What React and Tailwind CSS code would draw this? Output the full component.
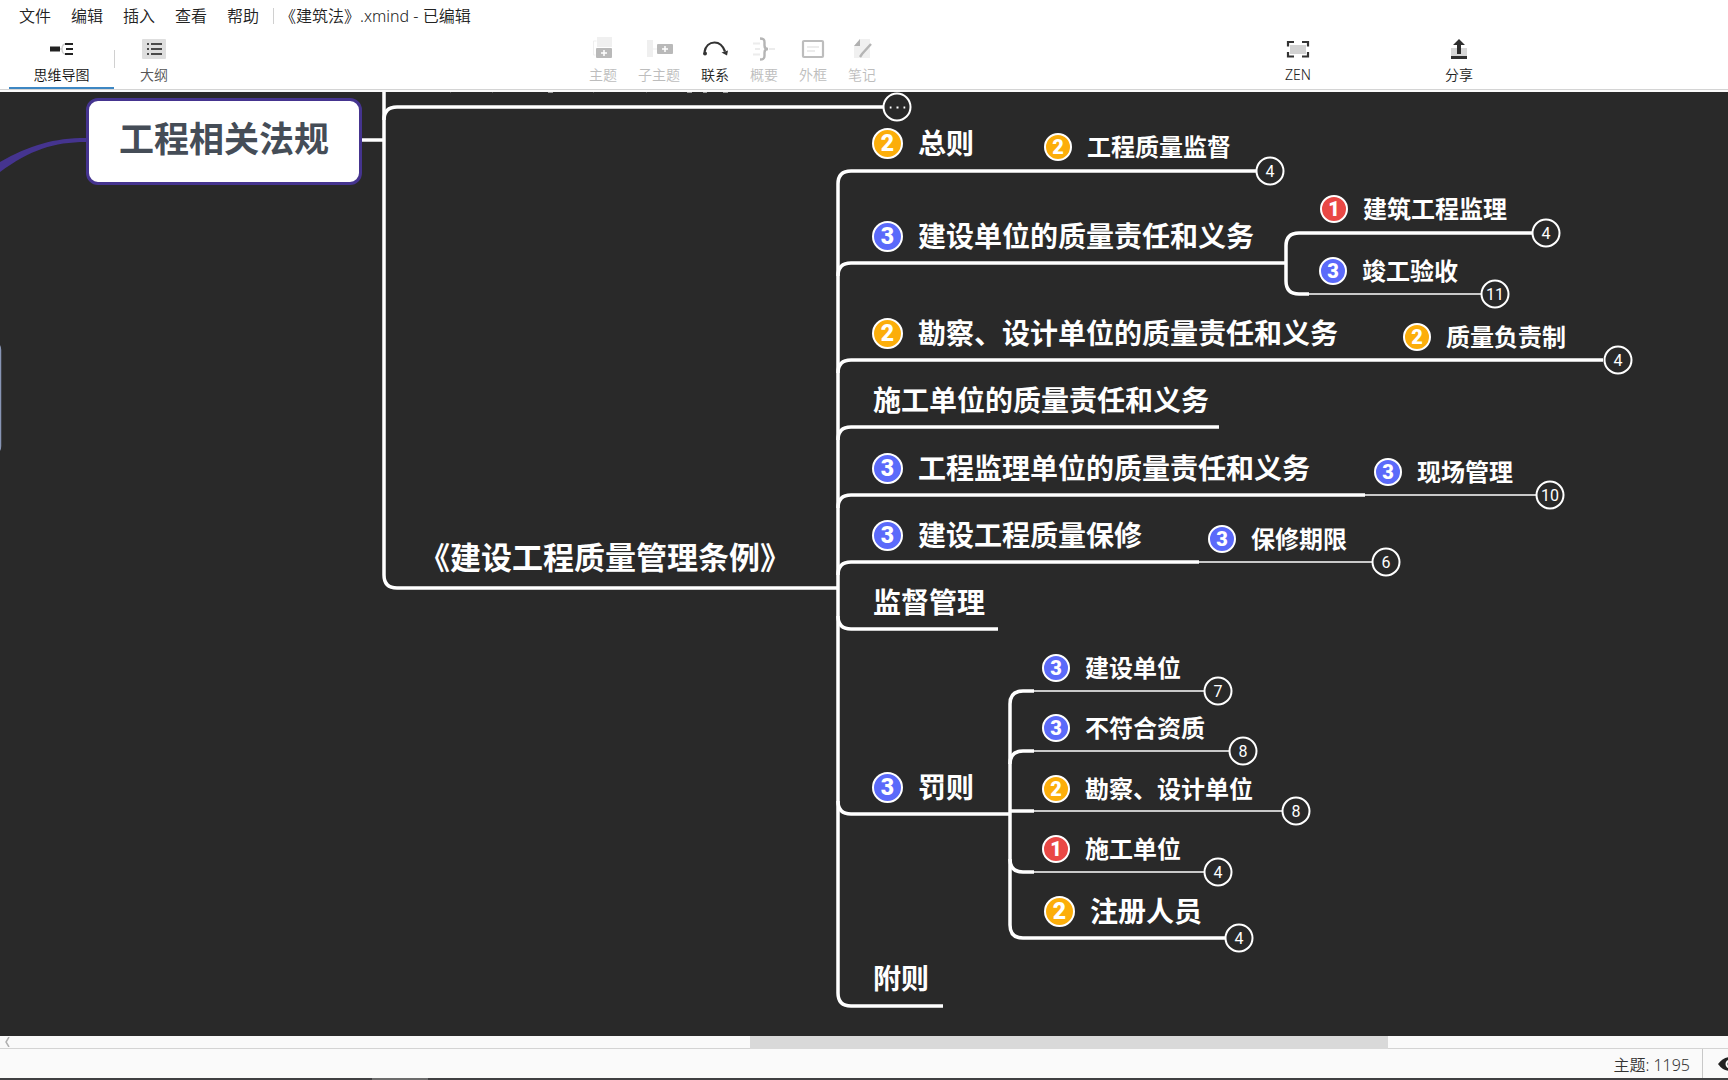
import React from 'react';
import clsx from 'clsx';

const MENUS = ['文件', '编辑', '插入', '查看', '帮助'];

const MindMapIcon = () => (
  <svg className="w-6 h-6" viewBox="1 0 24 24" fill="none">
    <path d="M1 9.500h10v5H1z" fill="#222" />
    <path d="M11 12h2M18 6.500c-3 0-5 2-5 5.500s2 5.500 5 5.500" stroke="#cfcfcf" strokeWidth="1.300" />
    <path d="M16 6h8v2h-8zM17 11h7v2h-7zM16 16h8v2h-8z" fill="#222" />
  </svg>
);

const OutlineIcon = () => (
  <svg className="w-6 h-6" viewBox="0 0 24 24">
    <rect x="0" y="2" width="24" height="20" rx="1" fill="#dedede" />
    <path d="M5 6h2v2H5zM9 6h11v2H9zM5 11h2v2H5zM9 11h11v2H9zM5 16h2v2H5zM9 16h11v2H9z" fill="#4a4a4a" />
  </svg>
);

const TopicIcon = () => (
  <svg className="w-6 h-6" viewBox="0 0 24 24" fill="none">
    <rect x="6" y="0" width="15" height="10" fill="#f0f0f0" />
    <path d="M5.500 4h-3v14h2" stroke="#efefef" />
    <rect x="5" y="11" width="16" height="10" rx="1" fill="#b9b9b9" />
    <path d="M13 13v6M10 16h6" stroke="#fff" strokeWidth="1.500" />
  </svg>
);

const SubtopicIcon = () => (
  <svg className="w-7 h-6" viewBox="0 0 28 24" fill="none">
    <rect x="2" y="3" width="6" height="17" fill="#efefef" />
    <path d="M8 12h4" stroke="#efefef" />
    <rect x="12" y="7" width="16" height="10" rx="1" fill="#b9b9b9" />
    <path d="M20 9v6M17 12h6" stroke="#fff" strokeWidth="1.500" />
  </svg>
);

const RelationIcon = () => (
  <svg className="w-7 h-6" viewBox="0 0 28 24" fill="none">
    <path d="M3.500 15c1-6 5-9.500 10-9.500 5.500 0 8.500 3.500 10.500 9" stroke="#333" strokeWidth="2.200" />
    <circle cx="4" cy="16.500" r="2" fill="#333" />
    <path d="M20.500 15.500l6.500-2-1 5z" fill="#333" />
  </svg>
);

const SummaryIcon = () => (
  <svg className="w-6 h-6" viewBox="0 0 24 24" fill="none">
    <path d="M1 6.500h7M3 12h5M1 17.500h7M17 12h6" stroke="#ececec" strokeWidth="2" />
    <path d="M8 1.500c4 0 4.500 1.500 4.500 4v3c0 2 1 3.500 3.500 3.500-2.500 0-3.500 1.500-3.500 3.500v3c0 2.500-.5 4-4.500 4" stroke="#b5b5b5" strokeWidth="2.400" />
  </svg>
);

const BoundaryIcon = () => (
  <svg className="w-6 h-6" viewBox="0 0 24 24" fill="none">
    <rect x="2" y="4" width="20" height="16" rx="1" stroke="#bdbdbd" strokeWidth="2.200" />
    <path d="M6 10h12M6 14h8" stroke="#ececec" strokeWidth="2" />
  </svg>
);

const NotesIcon = () => (
  <svg className="w-6 h-6" viewBox="0 0 24 24" fill="none">
    <path d="M10 2h10v19H4V9z" fill="#f0f0f0" />
    <path d="M10 2v7H4z" fill="#b0b0b0" />
    <path d="M21 7l-9 10-2 3" stroke="#b5b5b5" strokeWidth="2.400" />
  </svg>
);

const ZenIcon = () => (
  <svg className="w-6 h-6" viewBox="0 0 24 24" fill="none">
    <rect x="4" y="8" width="16" height="9" fill="#d2d2d2" />
    <path d="M2 9.500V5h6M16 5h6v4.500M22 15v4.500h-6M8 19.500H2V15" stroke="#333" strokeWidth="2.200" />
  </svg>
);

const ShareIcon = () => (
  <svg className="w-6 h-6" viewBox="0 0 24 24">
    <rect x="4" y="11" width="16" height="8" fill="#d6d6d6" />
    <path d="M12 2l6 6h-4v9h-4V8H6zM4 19h16v3H4z" fill="#2e2e2e" />
  </svg>
);

const TOOLS = [
  { label: '主题', icon: TopicIcon },
  { label: '子主题', icon: SubtopicIcon },
  { label: '联系', icon: RelationIcon, enabled: true },
  { label: '概要', icon: SummaryIcon },
  { label: '外框', icon: BoundaryIcon },
  { label: '笔记', icon: NotesIcon },
];

// x is the left edge, y the vertical centre of the topic on the canvas
const TOPICS = [
  { x: 419, y: 465, label: '《建设工程质量管理条例》', size: 'xl' },
  { x: 872, y: 51, label: '总则', size: 'lg', priority: 2 },
  { x: 1044, y: 55, label: '工程质量监督', size: 'md', priority: 2 },
  { x: 872, y: 144, label: '建设单位的质量责任和义务', size: 'lg', priority: 3 },
  { x: 1320, y: 117, label: '建筑工程监理', size: 'md', priority: 1 },
  { x: 1319, y: 179, label: '竣工验收', size: 'md', priority: 3 },
  { x: 872, y: 241, label: '勘察、设计单位的质量责任和义务', size: 'lg', priority: 2 },
  { x: 1403, y: 245, label: '质量负责制', size: 'md', priority: 2 },
  { x: 873, y: 308, label: '施工单位的质量责任和义务', size: 'lg' },
  { x: 872, y: 376, label: '工程监理单位的质量责任和义务', size: 'lg', priority: 3 },
  { x: 1374, y: 380, label: '现场管理', size: 'md', priority: 3 },
  { x: 872, y: 443, label: '建设工程质量保修', size: 'lg', priority: 3 },
  { x: 1208, y: 447, label: '保修期限', size: 'md', priority: 3 },
  { x: 873, y: 510, label: '监督管理', size: 'lg' },
  { x: 872, y: 695, label: '罚则', size: 'lg', priority: 3 },
  { x: 1042, y: 576, label: '建设单位', size: 'md', priority: 3 },
  { x: 1042, y: 636, label: '不符合资质', size: 'md', priority: 3 },
  { x: 1042, y: 697, label: '勘察、设计单位', size: 'md', priority: 2 },
  { x: 1042, y: 757, label: '施工单位', size: 'md', priority: 1 },
  { x: 1044, y: 819, label: '注册人员', size: 'lg', priority: 2 },
  { x: 873, y: 886, label: '附则', size: 'lg' },
];

// centres of the folded-children counters
const FOLDS = [
  { x: 897, y: 15, count: '···' },
  { x: 1270, y: 79, count: 4 },
  { x: 1546, y: 141, count: 4 },
  { x: 1495, y: 202, count: 11 },
  { x: 1618, y: 268, count: 4 },
  { x: 1550, y: 403, count: 10 },
  { x: 1386, y: 470, count: 6 },
  { x: 1218, y: 599, count: 7 },
  { x: 1243, y: 659, count: 8 },
  { x: 1296, y: 719, count: 8 },
  { x: 1218, y: 780, count: 4 },
  { x: 1239, y: 846, count: 4 },
];

const THICK_LINES = [
  'M362 48H384',
  'M384 0V483Q384 496 397 496H838',
  'M384 28Q384 15 397 15H883',
  'M838 496V92Q838 79 851 79H1256',
  'M838 184Q838 171 851 171H1286',
  'M838 281Q838 268 851 268H1603',
  'M838 348Q838 335 851 335H1219',
  'M838 416Q838 403 851 403H1365',
  'M838 483Q838 470 851 470H1199',
  'M838 524Q838 537 851 537H998',
  'M838 709Q838 722 851 722H1010',
  'M838 496V901Q838 914 851 914H943',
  'M1532 141H1299Q1286 141 1286 154V189Q1286 202 1299 202H1309',
  'M1034 599H1023Q1010 599 1010 612V833Q1010 846 1023 846H1225',
  'M1010 672Q1010 659 1023 659H1034',
  'M1010 719H1034',
  'M1010 767Q1010 780 1023 780H1034',
];

const THIN_LINES = [
  'M1309 202H1481',
  'M1365 403H1536',
  'M1199 470H1372',
  'M1034 599H1204',
  'M1034 659H1229',
  'M1034 719H1282',
  'M1034 780H1204',
];

const Priority = ({ value, large }) => (
  <span
    className={clsx(
      'flex shrink-0 items-center justify-center rounded-full border-2 border-white font-[Roboto] font-black leading-none text-white',
      large ? 'w-[31px] h-[31px] text-[23px]' : 'w-7 h-7 text-[20px]',
      value === 1 && 'bg-[#e94845]',
      value === 2 && 'bg-[#fcae0a]',
      value === 3 && 'bg-[#5b6afa]',
    )}
  >
    {value}
  </span>
);

const Topic = ({ x, y, label, size, priority }) => (
  <div
    className="absolute flex h-10 -translate-y-1/2 items-center gap-[15px] whitespace-nowrap font-bold text-white"
    style={{ left: x, top: y }}
  >
    {priority && <Priority value={priority} large={size === 'lg'} />}
    <span
      className={clsx(
        'leading-10',
        size === 'xl' && 'text-[31px]',
        size === 'lg' && 'text-[28px]',
        size === 'md' && 'text-[24px]',
      )}
    >
      {label}
    </span>
  </div>
);

const ToolButton = ({ icon: Icon, label, enabled }) => (
  <button
    type="button"
    disabled={!enabled}
    className={clsx(
      'flex flex-col items-center gap-1 pt-[5px] text-[14px] leading-5 whitespace-nowrap',
      enabled ? 'text-[#222]' : 'text-[#bdbdbd]',
    )}
  >
    <Icon />
    {label}
  </button>
);

const Header = () => (
  <header className="shrink-0 border-b border-[#d4d4d4] bg-white font-[350]">
    <div className="flex h-[31px] items-center pl-[19px] text-[16px] text-[#222]">
      <nav className="flex gap-5">
        {MENUS.map(menu => (
          <button key={menu} type="button">{menu}</button>
        ))}
      </nav>
      <div className="ml-[14px] mr-[6px] h-4 w-px bg-[#d0d0d0]" />
      <h1>《建筑法》.xmind - 已编辑</h1>
    </div>
    <div className="mt-px flex h-[57px]">
      <button
        type="button"
        className="ml-[9px] flex w-[105px] flex-col items-center gap-1 border-b-2 border-[#3d87c3] pt-[5px] text-[14px] leading-5 text-[#111]"
      >
        <MindMapIcon />
        思维导图
      </button>
      <div className="mt-[18px] h-[18px] w-px bg-[#d0d0d0]" />
      <button
        type="button"
        className="ml-[25px] flex flex-col items-center gap-1 pt-[5px] text-[14px] leading-5 text-[#555]"
      >
        <OutlineIcon />
        大纲
      </button>
      <div className="ml-[421px] flex gap-[21px]">
        {TOOLS.map(tool => (
          <ToolButton key={tool.label} {...tool} />
        ))}
      </div>
      <div className="ml-auto mr-[255px] flex gap-[134px]">
        <ToolButton icon={ZenIcon} label="ZEN" enabled />
        <ToolButton icon={ShareIcon} label="分享" enabled />
      </div>
    </div>
  </header>
);

const Canvas = () => (
  <main className="relative mt-0.5 min-h-0 flex-1 overflow-hidden bg-[#292929]">
    <svg className="absolute inset-0 h-full w-full" fill="none">
      <path d="M86 46C54 46 30 53 0 70V80C30 58 54 50 86 50z" fill="#45348f" />
      <path d="M-20 251H-6Q.5 251 .5 258V354Q.5 361-6 361H-20" stroke="#8794b4" strokeWidth="1.500" />
      <path d="M450 .5h1M492 .5h1M593 .5h1M646 .5h1" stroke="#555" />
      <path d="M548 .5h5M687 .5h5M703 .5h4M723 .5h5" stroke="#999" />
      <g stroke="#fff" strokeWidth="3.500">
        {THICK_LINES.map(d => <path key={d} d={d} />)}
      </g>
      <g stroke="#fff" strokeWidth="1.700">
        {THIN_LINES.map(d => <path key={d} d={d} />)}
      </g>
    </svg>
    <div className="absolute left-[86px] top-[6px] flex h-[87px] w-[276px] items-center justify-center rounded-xl border-[3px] border-[#45348f] bg-white pb-1 text-[35px] font-bold text-[#454d57]">
      工程相关法规
    </div>
    {TOPICS.map(topic => (
      <Topic key={`${topic.x}-${topic.y}`} {...topic} />
    ))}
    {FOLDS.map(({ x, y, count }) => (
      <button
        key={`${x}-${y}`}
        type="button"
        className="absolute flex h-[29px] w-[29px] -translate-x-1/2 -translate-y-1/2 items-center justify-center rounded-full border-2 border-white bg-[#292929] font-[Roboto] text-[16px] leading-none text-white"
        style={{ left: x, top: y }}
      >
        {count === '···' ? (
          <svg className="h-1 w-4" viewBox="0 0 16 4" fill="#fff">
            <path d="M0 1h2v2H0zM7 1h2v2H7zM14 1h2v2h-2z" />
          </svg>
        ) : count}
      </button>
    ))}
  </main>
);

const Footer = () => (
  <footer className="shrink-0 bg-[#fafafa]">
    <div className="flex h-[13px] border-b border-[#d4d4d4]">
      <div className="w-[43.4%] pl-1 pt-px">
        <svg className="h-2.5 w-2" viewBox="0 0 8 10" fill="none">
          <path d="M5 0L2 5l3 5" stroke="#b0b0b0" strokeWidth="1.500" />
        </svg>
      </div>
      <div className="h-[13px] w-[36.9%] bg-[#d9d9d9]" />
    </div>
    <div className="flex h-[29px] justify-end overflow-hidden text-[16px] font-[350] text-[#333]">
      <span className="mr-3 leading-8">主题: 1195</span>
      <div className="h-full w-px bg-[#c8c8c8]" />
      <button type="button" aria-label="显示" className="ml-[15px] w-[10px] overflow-hidden">
        <svg className="h-4 w-6" viewBox="0 0 24 16" fill="none">
          <path d="M0 8Q5 1 12 1t12 7q-5 7-12 7T0 8z" fill="#222" />
          <circle cx="12" cy="8" r="4.500" fill="#fff" />
          <circle cx="12" cy="8" r="2.500" fill="#222" />
        </svg>
      </button>
    </div>
    <div className="h-0.5 bg-[#404042]">
      <div className="ml-[21.5%] h-full w-14 bg-[#6c6c6c]" />
    </div>
  </footer>
);

export default function App() {
  return (
    <div className="flex h-screen flex-col overflow-hidden bg-[#fafafa] font-['Noto_Sans','Noto_Sans_CJK_SC',sans-serif]">
      <Header />
      <Canvas />
      <Footer />
    </div>
  );
}
